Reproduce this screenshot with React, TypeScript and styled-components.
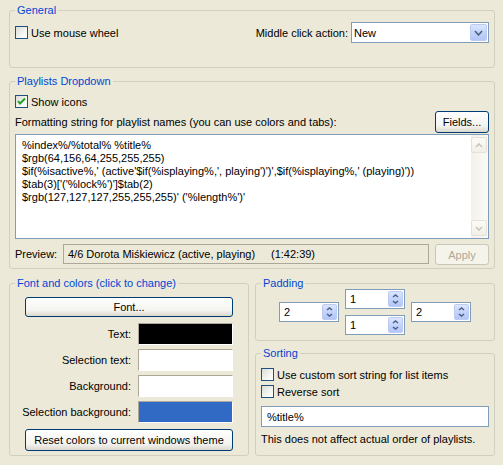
import React from "react";
import styled, { createGlobalStyle } from "styled-components";

const GlobalStyle = createGlobalStyle`
  html, body {
    margin: 0;
    padding: 0;
    background: #ece9d8;
  }
  body {
    font-family: "Liberation Sans", Arial, sans-serif;
    font-size: 11px;
    color: #000;
  }
`;

const FORMAT_LINES = [
  "%index%/%total% %title%",
  "$rgb(64,156,64,255,255,255)",
  "$if(%isactive%,' (active'$if(%isplaying%,', playing')')',$if(%isplaying%,' (playing)'))",
  "$tab(3)['('%lock%')']$tab(2)",
  "$rgb(127,127,127,255,255,255)' ('%length%')'",
];

const COLOR_ROWS = [
  { label: "Text:", color: "#000000" },
  { label: "Selection text:", color: "#ffffff" },
  { label: "Background:", color: "#ffffff" },
  { label: "Selection background:", color: "#316ac5" },
];

function CheckBox({ checked, label }: { checked?: boolean; label: string }) {
  return (
    <St.CheckRow>
      <St.CheckBoxBox>
        {checked && (
          <svg width="11" height="11" viewBox="0 0 11 11">
            <path d="M2 5 L4 7.5 L9 2.5" fill="none" stroke="#21a121" strokeWidth="2" />
          </svg>
        )}
      </St.CheckBoxBox>
      <span>{label}</span>
    </St.CheckRow>
  );
}

function Chevron({ dir, color, w, h }: { dir: "up" | "down"; color: string; w: number; h: number }) {
  const d = dir === "down" ? `M1 1 L${w / 2} ${h - 1} L${w - 1} 1` : `M1 ${h - 1} L${w / 2} 1 L${w - 1} ${h - 1}`;
  return (
    <svg width={w} height={h} viewBox={`0 0 ${w} ${h}`}>
      <path d={d} fill="none" stroke={color} strokeWidth="1.6" />
    </svg>
  );
}

function Spinner({ value }: { value: string }) {
  return (
    <St.SpinBox>
      <St.SpinValue>{value}</St.SpinValue>
      <St.SpinButtons>
        <Chevron dir="up" color="#4d6185" w={7} h={4} />
        <Chevron dir="down" color="#4d6185" w={7} h={4} />
      </St.SpinButtons>
    </St.SpinBox>
  );
}

export default function App() {
  return (
    <>
      <GlobalStyle />
      <St.Dialog>
        <St.Group $h={64}>
          <St.Legend>General</St.Legend>
          <St.GeneralRow>
            <CheckBox label="Use mouse wheel" />
            <St.ComboLabel>
              Middle click action:
              <St.Combo>
                <span>New</span>
                <St.ComboButton>
                  <Chevron dir="down" color="#4d6185" w={9} h={6} />
                </St.ComboButton>
              </St.Combo>
            </St.ComboLabel>
          </St.GeneralRow>
        </St.Group>

        <St.Group $h={194} $mt={7}>
          <St.Legend>Playlists Dropdown</St.Legend>
          <St.Stack $mt={6}>
            <CheckBox checked label="Show icons" />
          </St.Stack>
          <St.FormatRow>
            <span>Formatting string for playlist names (you can use colors and tabs):</span>
            <St.Button $w={54} $h={22}>Fields...</St.Button>
          </St.FormatRow>
          <St.EditArea>
            <St.EditText>
              {FORMAT_LINES.map((line) => (
                <div key={line}>{line}</div>
              ))}
            </St.EditText>
            <St.ScrollBar>
              <St.ScrollButton>
                <Chevron dir="up" color="#c9c7ba" w={8} h={5} />
              </St.ScrollButton>
              <St.ScrollButton>
                <Chevron dir="down" color="#c9c7ba" w={8} h={5} />
              </St.ScrollButton>
            </St.ScrollBar>
          </St.EditArea>
          <St.PreviewRow>
            <St.PreviewLabel>Preview:</St.PreviewLabel>
            <St.PreviewBox>
              <St.TabCell>4/6 Dorota Miśkiewicz (active, playing)</St.TabCell>
              <span>(1:42:39)</span>
            </St.PreviewBox>
            <St.Button $w={54} $h={21} $disabled>Apply</St.Button>
          </St.PreviewRow>
        </St.Group>

        <St.BottomRow>
          <St.Group $h={179} $w={240}>
            <St.Legend>Font and colors (click to change)</St.Legend>
            <St.ColorGrid>
              <St.WideButton $h={20}>Font...</St.WideButton>
              {COLOR_ROWS.map((row) => (
                <React.Fragment key={row.label}>
                  <St.ColorLabel>{row.label}</St.ColorLabel>
                  <St.Swatch $color={row.color} />
                </React.Fragment>
              ))}
              <St.WideButton $h={22}>Reset colors to current windows theme</St.WideButton>
            </St.ColorGrid>
          </St.Group>

          <St.RightColumn>
            <St.Group $h={64}>
              <St.Legend>Padding</St.Legend>
              <St.PaddingRow>
                <Spinner value="2" />
                <St.SpinColumn>
                  <Spinner value="1" />
                  <Spinner value="1" />
                </St.SpinColumn>
                <Spinner value="2" />
              </St.PaddingRow>
            </St.Group>
            <St.Group $grow $mt={6}>
              <St.Legend>Sorting</St.Legend>
              <St.Stack $mt={7} $gap={2}>
                <CheckBox label="Use custom sort string for list items" />
                <CheckBox label="Reverse sort" />
              </St.Stack>
              <St.TextInput>%title%</St.TextInput>
              <St.Note>This does not affect actual order of playlists.</St.Note>
            </St.Group>
          </St.RightColumn>
        </St.BottomRow>
      </St.Dialog>
    </>
  );
}

const St = {
  Dialog: styled.div`
    box-sizing: border-box;
    width: 503px;
    height: 465px;
    padding: 4px 8px 0 9px;
    display: flex;
    flex-direction: column;
  `,

  Group: styled.fieldset<{ $h?: number; $w?: number; $mt?: number; $grow?: boolean }>`
    box-sizing: border-box;
    margin: ${({ $mt }) => $mt ?? 0}px 0 0 0;
    padding: 0 5px;
    min-width: 0;
    border: 1px solid #d0d0bf;
    border-radius: 3px;
    display: flex;
    flex-direction: column;
    ${({ $h }) => ($h ? `height: ${$h}px;` : "")}
    ${({ $w }) => ($w ? `width: ${$w}px; flex: none;` : "")}
    ${({ $grow }) => ($grow ? "flex: 1;" : "")}
  `,

  Legend: styled.legend`
    padding: 0 2px;
    line-height: 13px;
    color: #0046d5;
  `,

  GeneralRow: styled.div`
    display: flex;
    align-items: center;
    justify-content: space-between;
    margin-top: 5px;
  `,

  CheckRow: styled.label`
    display: flex;
    align-items: center;
    gap: 3px;
    height: 15px;
  `,

  CheckBoxBox: styled.span`
    box-sizing: border-box;
    width: 13px;
    height: 13px;
    border: 1px solid #1c5180;
    background: linear-gradient(135deg, #dcdcd7 0%, #f4f4f0 60%, #ffffff 100%);
    display: flex;
    align-items: center;
    justify-content: center;
  `,

  ComboLabel: styled.div`
    display: flex;
    align-items: center;
    gap: 3px;
  `,

  Combo: styled.div`
    box-sizing: border-box;
    width: 138px;
    height: 21px;
    border: 1px solid #7f9db9;
    background: #fff;
    display: flex;
    align-items: center;
    justify-content: space-between;
    padding: 1px 1px 1px 2px;
  `,

  ComboButton: styled.div`
    box-sizing: border-box;
    width: 17px;
    height: 17px;
    border: 1px solid #bccbf3;
    border-radius: 2px;
    background: linear-gradient(180deg, #dce6fd 0%, #c3d3fb 50%, #b3c6f7 100%);
    display: flex;
    align-items: center;
    justify-content: center;
  `,

  Stack: styled.div<{ $mt?: number; $gap?: number }>`
    display: flex;
    flex-direction: column;
    margin-top: ${({ $mt }) => $mt ?? 0}px;
    gap: ${({ $gap }) => $gap ?? 0}px;
  `,

  FormatRow: styled.div`
    display: flex;
    align-items: center;
    justify-content: space-between;
    margin-top: 2px;
  `,

  Button: styled.div<{ $w: number; $h: number; $disabled?: boolean }>`
    box-sizing: border-box;
    width: ${({ $w }) => $w}px;
    height: ${({ $h }) => $h}px;
    flex: none;
    display: flex;
    align-items: center;
    justify-content: center;
    border-radius: 3px;
    border: 1px solid ${({ $disabled }) => ($disabled ? "#c9c7ba" : "#003c74")};
    background: ${({ $disabled }) =>
      $disabled ? "#f5f4ea" : "linear-gradient(180deg, #ffffff 0%, #f3f3ef 70%, #dcd8cc 100%)"};
    color: ${({ $disabled }) => ($disabled ? "#aca899" : "#000")};
  `,

  WideButton: styled.div<{ $h: number }>`
    grid-column: 1 / -1;
    box-sizing: border-box;
    height: ${({ $h }) => $h}px;
    margin-left: 10px;
    display: flex;
    align-items: center;
    justify-content: center;
    border-radius: 3px;
    border: 1px solid #003c74;
    background: linear-gradient(180deg, #ffffff 0%, #f3f3ef 70%, #dcd8cc 100%);
  `,

  EditArea: styled.div`
    box-sizing: border-box;
    height: 105px;
    margin-top: 1px;
    border: 1px solid #7f9db9;
    background: #fff;
    display: flex;
  `,

  EditText: styled.div`
    flex: 1;
    padding: 4px 0 0 6px;
    line-height: 13px;
    white-space: pre;
    overflow: hidden;
  `,

  ScrollBar: styled.div`
    box-sizing: border-box;
    width: 17px;
    padding: 2px 1px 2px 0;
    display: flex;
    flex-direction: column;
    justify-content: space-between;
    background: linear-gradient(90deg, #f3f1ea 0%, #fbfaf6 100%);
  `,

  ScrollButton: styled.div`
    box-sizing: border-box;
    height: 16px;
    border: 1px solid #e4e1d5;
    border-radius: 2px;
    background: linear-gradient(180deg, #fbfaf7 0%, #f1efe7 100%);
    display: flex;
    align-items: center;
    justify-content: center;
  `,

  PreviewRow: styled.div`
    display: flex;
    align-items: flex-start;
    margin-top: 5px;
  `,

  PreviewLabel: styled.span`
    width: 48px;
    line-height: 20px;
  `,

  PreviewBox: styled.div`
    box-sizing: border-box;
    flex: 1;
    height: 20px;
    margin-right: 6px;
    padding-left: 4px;
    border: 1px solid #aca899;
    display: flex;
    align-items: center;
    white-space: pre;
  `,

  TabCell: styled.span`
    display: inline-block;
    width: 203px;
  `,

  BottomRow: styled.div`
    display: flex;
    gap: 6px;
    margin-top: 8px;
  `,

  RightColumn: styled.div`
    width: 240px;
    flex: none;
    display: flex;
    flex-direction: column;
    height: 179px;
  `,

  ColorGrid: styled.div`
    display: grid;
    grid-template-columns: 116px 95px;
    column-gap: 7px;
    row-gap: 4px;
    margin-top: 7px;
    & > :nth-child(2),
    & > :nth-child(3),
    & > :last-child {
      margin-top: 2px;
    }
  `,

  ColorLabel: styled.span`
    text-align: right;
    line-height: 22px;
    white-space: nowrap;
  `,

  Swatch: styled.div<{ $color: string }>`
    box-sizing: border-box;
    height: 22px;
    border: 1px solid;
    border-color: #aca899 #ffffff #ffffff #aca899;
    background: ${({ $color }) => $color};
  `,

  PaddingRow: styled.div`
    display: flex;
    align-items: center;
    justify-content: center;
    gap: 6px;
    margin-top: -1px;
  `,

  SpinColumn: styled.div`
    display: flex;
    flex-direction: column;
    gap: 6px;
  `,

  SpinBox: styled.div`
    box-sizing: border-box;
    width: 60px;
    height: 20px;
    border: 1px solid #7f9db9;
    background: #fff;
    display: flex;
    align-items: center;
    padding: 1px;
  `,

  SpinValue: styled.span`
    flex: 1;
    padding-left: 3px;
  `,

  SpinButtons: styled.div`
    box-sizing: border-box;
    width: 15px;
    height: 16px;
    border: 1px solid #bccbf3;
    border-radius: 2px;
    background: linear-gradient(180deg, #dce6fd 0%, #c3d3fb 50%, #b3c6f7 100%);
    display: flex;
    flex-direction: column;
    align-items: center;
    justify-content: center;
    gap: 2px;
  `,

  TextInput: styled.div`
    box-sizing: border-box;
    height: 21px;
    margin-top: 7px;
    padding-left: 5px;
    border: 1px solid #7f9db9;
    background: #fff;
    display: flex;
    align-items: center;
  `,

  Note: styled.div`
    margin-top: 6px;
    line-height: 13px;
  `,
};
